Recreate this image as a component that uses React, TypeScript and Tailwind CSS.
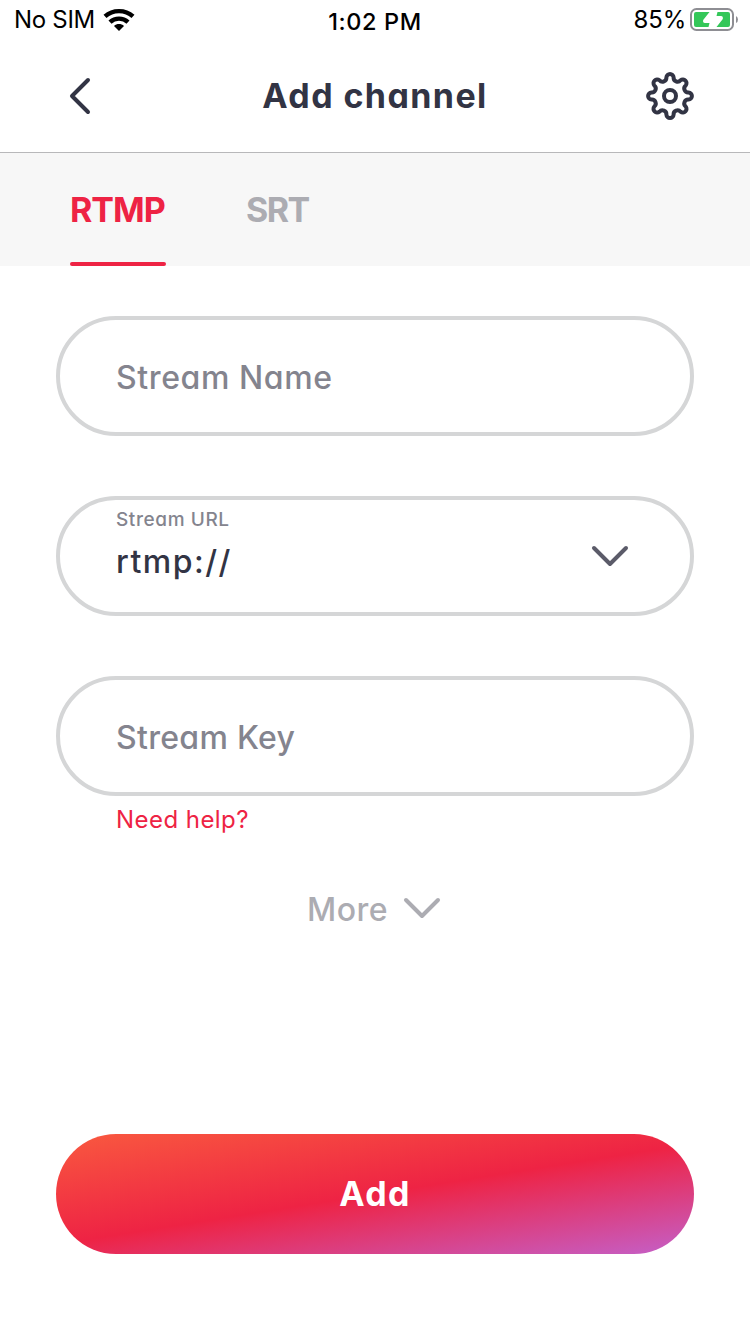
import type { ReactNode } from "react";

const gearPath = (() => {
  const steps = 8;
  const pt = (r: number, deg: number) => {
    const a = ((deg - 90) * Math.PI) / 180;
    return `${(24 + r * Math.cos(a)).toFixed(2)} ${(24 + r * Math.sin(a)).toFixed(2)}`;
  };
  let d = "";
  for (let i = 0; i < steps; i++) {
    const t = i * 45;
    d += `${i === 0 ? "M" : "L"}${pt(18.9, t - 11)}A3.62 3.62 0 0 1 ${pt(18.9, t + 11)}`;
    d += `A3.95 3.95 0 0 0 ${pt(18.9, t + 34)}`;
  }
  return d + "Z";
})();

function Field({ children }: { children: ReactNode }) {
  return (
    <div className="flex h-[120px] items-center rounded-full border-4 border-[#d5d6d7] pl-14 pr-[61px]">
      {children}
    </div>
  );
}

function Chevron() {
  return (
    <svg width="38" height="22" viewBox="0 0 38 22" fill="none" stroke="currentColor" strokeWidth="4" strokeLinecap="round" strokeLinejoin="round">
      <path d="M3 3L19 19L35 3" />
    </svg>
  );
}

export default function App() {
  return (
    <div className="flex h-[1334px] w-[750px] flex-col bg-white font-['Inter',sans-serif] text-[#323444] [font-feature-settings:'cv11']">
      <div className="grid h-10 grid-cols-3 items-center text-black">
        <div className="flex items-center gap-2 pl-3.5">
          <span className="text-[24px] leading-10 tracking-[-0.3px]">No SIM</span>
          <svg width="32" height="24" viewBox="0 0 32 24" fill="none" stroke="black" strokeWidth="4.4">
            <path d="M2 8.4C9.8 1.4 22.2 1.4 30 8.4" />
            <path d="M7 14.2C12 9.4 20 9.4 25 14.2" />
            <path d="M16 23L11 18C13.8 15.4 18.2 15.4 21 18Z" fill="black" stroke="none" />
          </svg>
        </div>
        <span className="pt-1 text-center text-[23.5px] font-medium tracking-[0.6px]">1:02 PM</span>
        <div className="flex items-center justify-end gap-1 pr-3">
          <span className="text-[24px] tracking-[-0.2px]">85%</span>
          <svg width="48" height="24" viewBox="0 0 48 24">
            <rect x="1" y="1" width="42" height="21" rx="5.5" fill="none" stroke="#8e8e93" strokeWidth="2" />
            <rect x="4" y="4" width="36" height="15" rx="2" fill="#34c759" />
            <path d="M19.5 4L13.2 12Q12.5 14.8 15 15H19.5L18.5 19H26.5L32.8 11Q33.3 8.2 31 8H26.5L27.5 4Z" fill="white" />
            <path d="M46 8V15Q48 14 48 11.5T46 8" fill="#8e8e93" />
          </svg>
        </div>
      </div>
      <header className="flex h-[113px] items-center border-b border-[#b8b8ba] pl-[68px] pr-14">
        <svg width="24" height="38" viewBox="0 0 24 38" fill="none" stroke="currentColor" strokeWidth="4" strokeLinecap="round" strokeLinejoin="round">
          <path d="M20 3L4 19L20 35" />
        </svg>
        <h1 className="grow pb-0.5 pl-3 text-center text-[34px] font-bold tracking-[1.4px]">Add channel</h1>
        <svg width="48" height="48" viewBox="0 0 48 48" fill="none" stroke="currentColor" strokeWidth="4" strokeLinejoin="round">
          <path d={gearPath} />
          <circle cx="24" cy="24" r="6" />
        </svg>
      </header>
      <nav className="flex h-[113px] gap-20 bg-[#f7f7f7] pl-[70px] text-[34px] font-bold tracking-[-1px]">
        <div className="flex w-24 flex-col justify-between text-[#ee2344]">
          <span className="pt-[31px]">RTMP</span>
          <span className="h-1 rounded-full bg-[#ee2344]" />
        </div>
        <span className="pt-[31px] tracking-[-1.5px] text-[#acacb2]">SRT</span>
      </nav>
      <main className="flex grow flex-col px-14 pt-[50px]">
        <div className="flex flex-col gap-[60px]">
          <Field>
            <span className="pt-1 text-[32px] font-medium tracking-[0.6px] text-[#84848e]">Stream Name</span>
          </Field>
          <Field>
            <div className="flex grow flex-col gap-[5px] pb-[17px]">
              <span className="text-[19px] font-medium leading-6 tracking-[0.6px] text-[#84848e]">Stream URL</span>
              <span className="text-[32px] font-medium leading-[50px] tracking-[1.5px]">rtmp://</span>
            </div>
            <span className="text-[#5b5b69]">
              <Chevron />
            </span>
          </Field>
          <Field>
            <span className="pt-1 text-[32px] font-medium tracking-[0.3px] text-[#84848e]">Stream Key</span>
          </Field>
        </div>
        <a className="pl-[60px] pt-2 text-[24px] leading-8 tracking-[0.45px] text-[#ee2344]">Need help?</a>
        <div className="flex items-start justify-center gap-[15px] pr-0.5 pt-[50px] text-[#acacb2]">
          <span className="text-[32px] font-medium leading-[48px] tracking-[0.5px]">More</span>
          <span className="pt-[11px]">
            <Chevron />
          </span>
        </div>
        <button className="mb-20 mt-auto h-[120px] rounded-full bg-[linear-gradient(171deg,#f9593f,#ee2344_50%,#c460c9)] pb-0.5 text-[34px] font-bold tracking-[1.4px] text-white">
          Add
        </button>
      </main>
    </div>
  );
}
